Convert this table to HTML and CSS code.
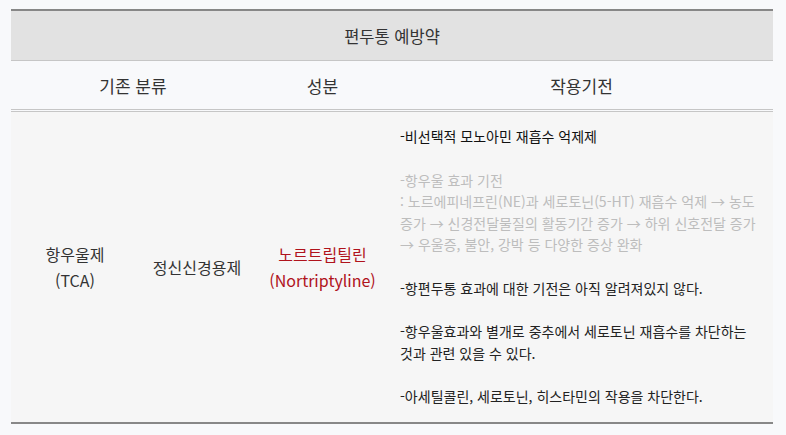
FILE: index.html
```html
<!DOCTYPE html>
<html lang="ko">
<head>
<meta charset="utf-8">
<link rel="stylesheet" href="styles.css">
</head>
<body>
<table class="drug">
  <colgroup>
    <col class="c1"><col class="c2"><col class="c3"><col class="c4">
  </colgroup>
  <thead>
    <tr class="title-row"><th colspan="4">편두통 예방약</th></tr>
    <tr class="col-row">
      <th colspan="2">기존 분류</th>
      <th>성분</th>
      <th>작용기전</th>
    </tr>
  </thead>
  <tbody>
    <tr class="body-row">
      <td class="cell-center">항우울제<br>(TCA)</td>
      <td class="cell-center">정신신경용제</td>
      <td class="cell-center name">노르트립틸린<br>(Nortriptyline)</td>
      <td class="mech">
        <p class="dark">-비선택적 모노아민 재흡수 억제제</p>
        <p class="muted">-항우울 효과 기전<br>: 노르에피네프린(NE)과 세로토닌(5-HT) 재흡수 억제 → 농도 증가 → 신경전달물질의 활동기간 증가 → 하위 신호전달 증가 → 우울증, 불안, 강박 등 다양한 증상 완화</p>
        <p>-항편두통 효과에 대한 기전은 아직 알려져있지 않다.</p>
        <p>-항우울효과와 별개로 중추에서 세로토닌 재흡수를 차단하는 것과 관련 있을 수 있다.</p>
        <p>-아세틸콜린, 세로토닌, 히스타민의 작용을 차단한다.</p>
      </td>
    </tr>
  </tbody>
</table>
</body>
</html>
```

FILE: styles.css
```css
html, body {
  margin: 0;
  padding: 0;
  background: #f8f9fb;
}
body {
  padding: 9px 0 0 11px;
  font-family: "Noto Sans CJK KR", "Noto Sans", sans-serif;
  color: #333;
}
.drug {
  width: 762px;
  border-collapse: collapse;
  table-layout: fixed;
}
.c1 { width: 128px; }
.c2 { width: 116px; }
.c3 { width: 135px; }
.c4 { width: 383px; }

.title-row th {
  height: 49px;
  padding: 0;
  background: #e2e2e2;
  border-top: 2px solid #878787;
  border-bottom: 1px solid #c6c6c6;
  font-size: 16.5px;
  font-weight: 400;
  color: #333;
  text-align: center;
}
.col-row th {
  height: 48px;
  padding: 0;
  background: #f8f9fb;
  border-bottom: 3px double #c6c6c6;
  font-size: 17px;
  font-weight: 400;
  color: #333;
  text-align: center;
}
.body-row td {
  background: #f6f6f6;
  border-bottom: 2px solid #888;
  vertical-align: middle;
}
.cell-center {
  text-align: center;
  font-size: 16px;
  line-height: 26px;
  color: #333;
  padding: 0;
}
.name {
  color: #b0131c;
}
.mech {
  padding: 14px 10px 14px 10px;
  font-size: 14px;
  line-height: 21.5px;
  color: #222;
  text-align: left;
}
.mech p {
  margin: 0 0 22px 0;
}
.mech p:last-child {
  margin-bottom: 0;
}
.mech .dark { color: #111; }
.mech .muted { color: #bdbdbd; }
```
